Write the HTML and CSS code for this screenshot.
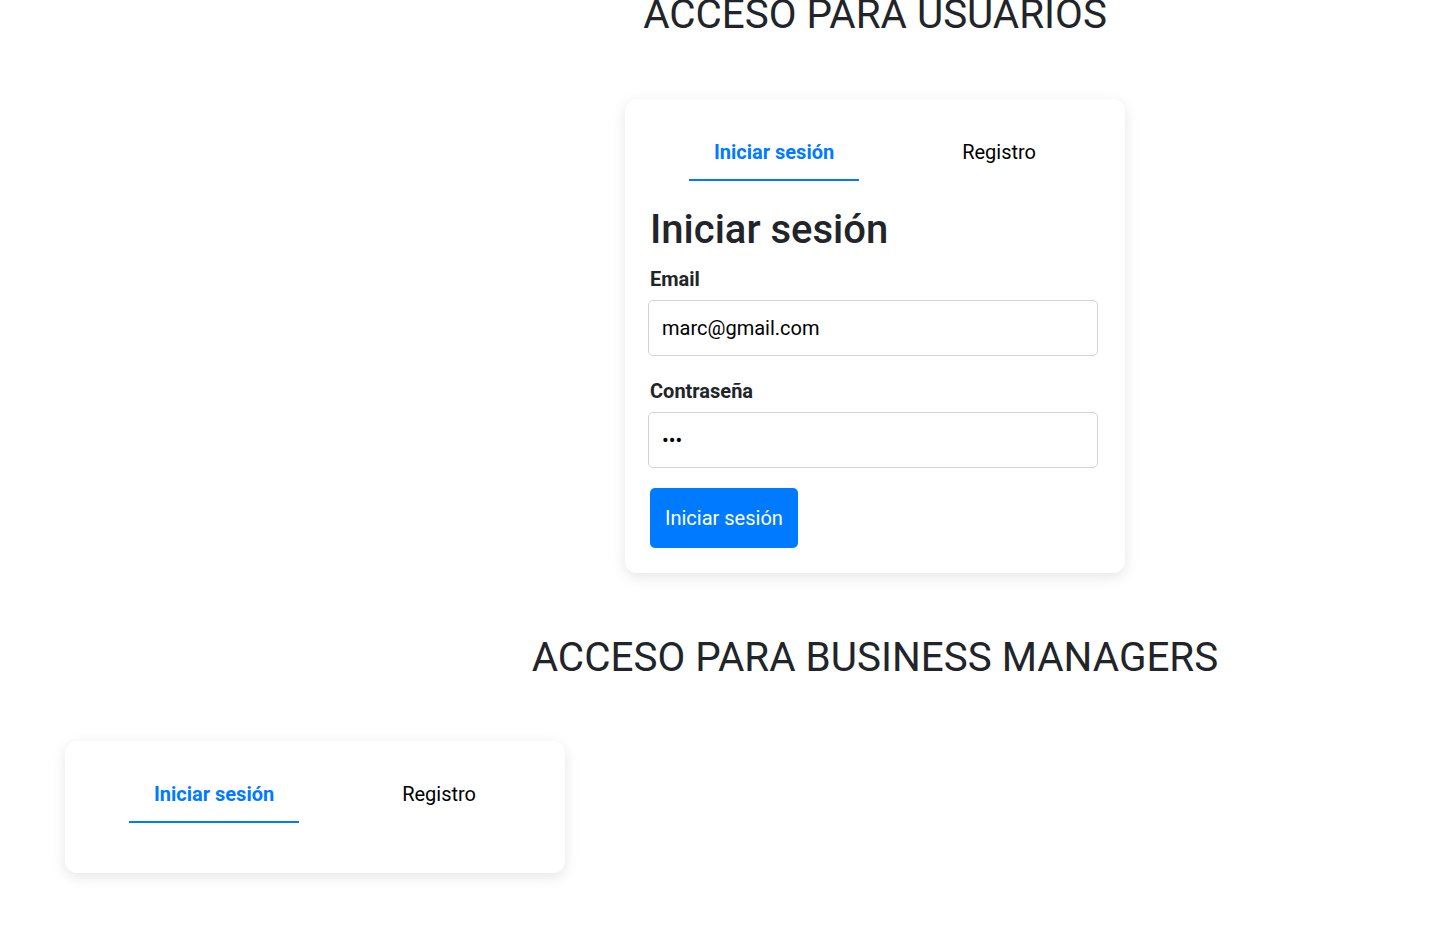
FILE: index.html
```html
<!DOCTYPE html>
<html lang="es">
<head>
<meta charset="utf-8">
<title>Acceso</title>
<link rel="stylesheet" href="styles.css">
</head>
<body>
<div class="page">
  <section class="block">
    <h1 class="title title-first">ACCESO PARA USUARIOS</h1>
    <div class="card">
      <div class="tabs">
        <div class="tab active">Iniciar sesión</div>
        <div class="tab">Registro</div>
      </div>
      <form class="form">
        <h2 class="form-title">Iniciar sesión</h2>
        <div class="group">
          <label class="label">Email</label>
          <input class="input" type="text" value="marc@gmail.com">
        </div>
        <div class="group group-last">
          <label class="label">Contraseña</label>
          <input class="input" type="password" value="abc">
        </div>
        <button type="button" class="btn">Iniciar sesión</button>
      </form>
    </div>
    <h1 class="title">ACCESO PARA BUSINESS MANAGERS</h1>
  </section>
  <div class="card card-left">
    <div class="tabs">
      <div class="tab active">Iniciar sesión</div>
      <div class="tab">Registro</div>
    </div>
  </div>
</div>
</body>
</html>
```
FILE: styles.css
```css
html, body {
  margin: 0;
  padding: 0;
  background: #ffffff;
}
body {
  font-family: Roboto, "Liberation Sans", sans-serif;
  color: #212529;
  overflow: hidden;
}
.page {
  padding-bottom: 40px;
}
.block {
  margin-left: 300px;
  display: flex;
  flex-direction: column;
  align-items: center;
}
.title {
  font-size: 40.4px;
  font-weight: 400;
  line-height: 48px;
  margin: 0 0 59px;
  color: #212529;
  text-align: center;
}
.title-first {
  margin-top: -9px;
  margin-bottom: 60px;
}
.card {
  width: 500px;
  box-sizing: border-box;
  padding: 25px;
  background: #fff;
  border-radius: 12px;
  box-shadow: 0 4px 14px rgba(0, 0, 0, 0.1);
  margin-bottom: 61px;
}
.card-left {
  margin-left: 65px;
  margin-bottom: 0;
}
.tabs {
  display: flex;
  justify-content: space-around;
  margin-bottom: 25px;
}
.tab {
  font-size: 20px;
  line-height: 27px;
  padding: 15px 25px 13px;
  border-bottom: 2px solid transparent;
  color: #000;
}
.tab.active {
  color: #007bff;
  font-weight: 700;
  border-bottom-color: #007bff;
}
.form {
  margin: 0;
}
.form-title {
  font-size: 40px;
  font-weight: 500;
  line-height: 48px;
  margin: 0 0 12px;
  color: #212529;
}
.group {
  margin-bottom: 22px;
}
.group-last {
  margin-bottom: 20px;
}
.label {
  display: block;
  font-size: 20px;
  font-weight: 700;
  line-height: 27px;
  margin-bottom: 7px;
  color: #212529;
}
.input {
  display: block;
  width: 450px;
  height: 56px;
  margin-left: -2px;
  box-sizing: border-box;
  border: 1px solid #d3d3d3;
  border-radius: 5px;
  padding: 0 13px;
  font-family: Roboto, "Liberation Sans", sans-serif;
  font-size: 20px;
  color: #000;
  background: #fff;
  outline: none;
}
.btn {
  display: block;
  height: 60px;
  padding: 0 15px;
  border: none;
  border-radius: 5px;
  background: #007bff;
  color: #fff;
  font-family: Roboto, "Liberation Sans", sans-serif;
  font-size: 20px;
  cursor: pointer;
}
```
